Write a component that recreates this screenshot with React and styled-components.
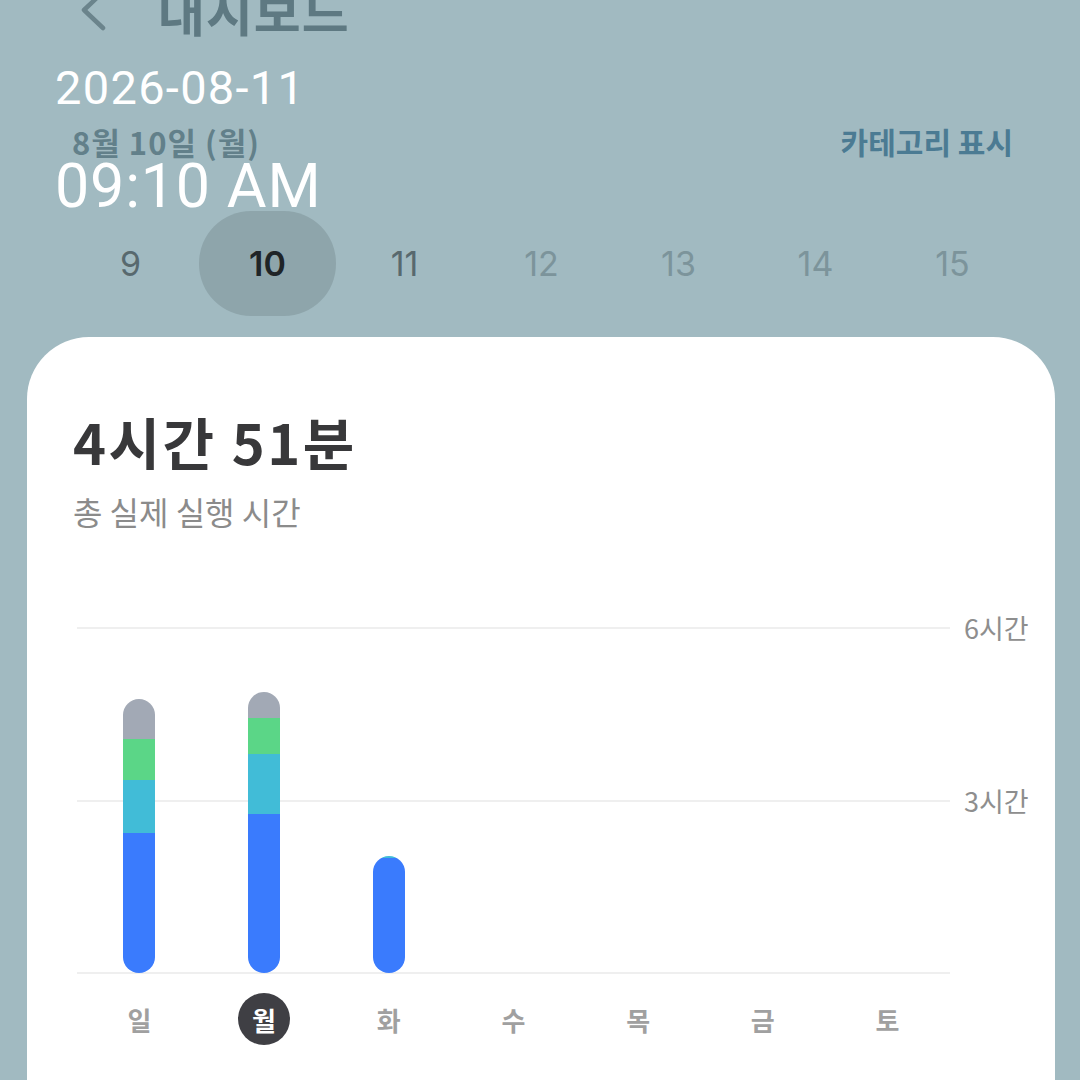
import React from "react";
import styled, { createGlobalStyle } from "styled-components";

const KR = `"Noto Sans CJK KR", "Noto Sans", sans-serif`;

const GlobalStyle = createGlobalStyle`
  html, body {
    margin: 0;
    padding: 0;
    background: #a1bac1;
    overflow: hidden;
  }
`;

const Screen = styled.div`
  position: relative;
  width: 1080px;
  height: 1080px;
  overflow: hidden;
  background: #a1bac1;
  font-family: ${KR};
  display: flex;
  flex-direction: column;
`;

const Header = styled.div`
  display: flex;
  align-items: center;
  height: 64px;
  margin-top: -22px;
  padding-left: 78px;
  gap: 50px;
`;

const Title = styled.h1`
  margin: 0;
  font-size: 51px;
  font-weight: 700;
  color: #5e7982;
  letter-spacing: 1px;
`;

const SubRow = styled.div`
  display: flex;
  justify-content: space-between;
  align-items: center;
  margin-top: 81px;
  padding: 0 67px 0 72px;
  height: 36px;
`;

const DateLabel = styled.span`
  font-size: 31px;
  font-weight: 700;
  color: #62808a;
  letter-spacing: 1px;
`;

const ToggleLink = styled.span`
  font-size: 30px;
  font-weight: 700;
  color: #4b7b93;
`;

const DateStrip = styled.div`
  display: grid;
  grid-template-columns: repeat(7, 137px);
  padding-left: 62px;
  margin-top: 52px;
`;

const DateCell = styled.div`
  display: flex;
  justify-content: center;
  align-items: center;
  height: 105px;
  font-family: Inter, Roboto, sans-serif;
  font-size: 34px;
  font-weight: ${(p) => (p.$active ? 600 : 400)};
  color: ${(p) => (p.$active ? "#1f2427" : p.$past ? "#58696e" : "#7c949b")};
  background: ${(p) => (p.$active ? "#8ea5ab" : "transparent")};
  border-radius: 52px;
`;

const Card = styled.div`
  margin: 21px 25px 0 27px;
  flex: 1;
  background: #ffffff;
  border-radius: 62px 62px 0 0;
  padding: 71px 0 0 46px;
`;

const Total = styled.div`
  font-size: 56px;
  font-weight: 700;
  color: #38383a;
  line-height: 66px;
  letter-spacing: 2.5px;
`;

const Caption = styled.div`
  margin-top: 17px;
  font-size: 32px;
  color: #8b8b8b;
  line-height: 40px;
`;

const ChartRow = styled.div`
  display: flex;
  margin: 96px 0 0 4px;
`;

const Plot = styled.div`
  position: relative;
  flex-shrink: 0;
  width: 873px;
  height: 346px;
  display: grid;
  grid-template-columns: repeat(7, 1fr);
  align-items: end;
`;

const GridLine = styled.div`
  position: absolute;
  left: 0;
  right: 0;
  top: ${(p) => p.$top}px;
  height: 1.5px;
  background: #efefef;
`;

const BarSlot = styled.div`
  position: relative;
  display: flex;
  justify-content: center;
  align-items: flex-end;
  height: 100%;
`;

const Bar = styled.div`
  width: 32px;
  border-radius: 16px;
  overflow: hidden;
  display: flex;
  flex-direction: column;
`;

const Segment = styled.div`
  background: ${(p) => p.$color};
`;

const Axis = styled.div`
  position: relative;
  flex-shrink: 0;
  width: 80px;
  margin-left: 14px;
`;

const AxisLabel = styled.span`
  position: absolute;
  left: 0;
  top: ${(p) => p.$top}px;
  transform: translateY(-50%);
  font-size: 27px;
  color: #8e8e8e;
  white-space: nowrap;
`;

const DayRow = styled.div`
  display: grid;
  grid-template-columns: repeat(7, 124.7px);
  margin: 20px 0 0 4px;
`;

const Day = styled.div`
  display: flex;
  justify-content: center;
`;

const DayMark = styled.span`
  width: 52px;
  height: 52px;
  border-radius: 50%;
  display: flex;
  justify-content: center;
  align-items: center;
  font-size: 26px;
  font-weight: 700;
  color: ${(p) => (p.$active ? "#ffffff" : "#a0a0a0")};
  background: ${(p) => (p.$active ? "#3f3f44" : "transparent")};
`;

const Overlay = styled.div`
  position: absolute;
  left: 55px;
  top: 60px;
  color: #ffffff;
  font-family: Roboto, Inter, sans-serif;
  pointer-events: none;
`;

const OverlayDate = styled.div`
  font-size: 47px;
  line-height: 56px;
  letter-spacing: 1.3px;
`;

const OverlayTime = styled.div`
  margin-top: 37px;
  font-size: 61px;
  line-height: 66px;
  letter-spacing: 0.8px;
`;

const COLORS = { work: "#3a7bfd", study: "#41bcd7", health: "#5bd687", etc: "#a2a9b5" };
const PX_PER_MIN = 346 / 360;

const week = [
  { day: "일", parts: [["etc", 41], ["health", 43], ["study", 55], ["work", 146]] },
  { day: "월", active: true, parts: [["etc", 27], ["health", 37], ["study", 63], ["work", 165]] },
  { day: "화", parts: [["study", 2], ["work", 120]] },
  { day: "수", parts: [] },
  { day: "목", parts: [] },
  { day: "금", parts: [] },
  { day: "토", parts: [] },
];

const dates = [9, 10, 11, 12, 13, 14, 15];

const Chevron = () => (
  <svg width="30" height="44" viewBox="0 0 30 44">
    <path d="M25 4 L6 22 L25 40" fill="none" stroke="#6b848c" strokeWidth="4.5" strokeLinecap="round" strokeLinejoin="round" />
  </svg>
);

export default function App() {
  return (
    <>
      <GlobalStyle />
      <Screen>
        <Header>
          <Chevron />
          <Title>대시보드</Title>
        </Header>
        <SubRow>
          <DateLabel>8월 10일 (월)</DateLabel>
          <ToggleLink>카테고리 표시</ToggleLink>
        </SubRow>
        <DateStrip>
          {dates.map((d) => (
            <DateCell key={d} $active={d === 10} $past={d <= 11}>
              {d}
            </DateCell>
          ))}
        </DateStrip>
        <Card>
          <Total>4시간 51분</Total>
          <Caption>총 실제 실행 시간</Caption>
          <ChartRow>
            <Plot>
              <GridLine $top={0} />
              <GridLine $top={173} />
              <GridLine $top={345} />
              {week.map((w) => (
                <BarSlot key={w.day}>
                  {w.parts.length > 0 && (
                    <Bar>
                      {w.parts.map(([cat, min]) => (
                        <Segment key={cat} $color={COLORS[cat]} style={{ height: min * PX_PER_MIN }} />
                      ))}
                    </Bar>
                  )}
                </BarSlot>
              ))}
            </Plot>
            <Axis>
              <AxisLabel $top={0}>6시간</AxisLabel>
              <AxisLabel $top={173}>3시간</AxisLabel>
            </Axis>
          </ChartRow>
          <DayRow>
            {week.map((w) => (
              <Day key={w.day}>
                <DayMark $active={w.active}>{w.day}</DayMark>
              </Day>
            ))}
          </DayRow>
        </Card>
        <Overlay>
          <OverlayDate>2026-08-11</OverlayDate>
          <OverlayTime>09:10 AM</OverlayTime>
        </Overlay>
      </Screen>
    </>
  );
}
